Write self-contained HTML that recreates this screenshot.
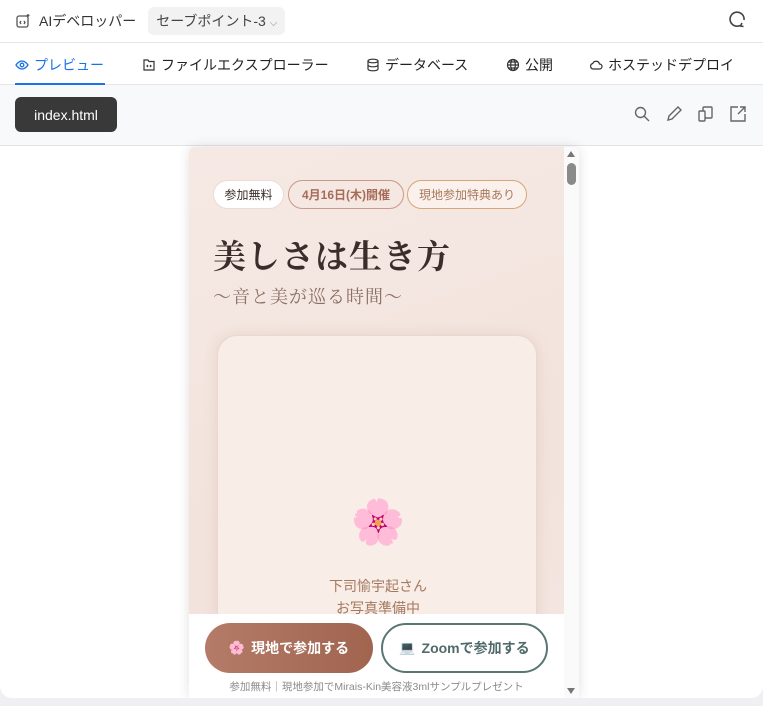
<!DOCTYPE html>
<html><head><meta charset="utf-8"><style>
*{margin:0;padding:0;box-sizing:border-box}
body{width:763px;height:706px;background:#f0f0f2;font-family:"Liberation Sans","Noto Sans CJK JP",sans-serif;overflow:hidden;position:relative}
.card{position:absolute;left:0;top:0;width:763px;height:698px;background:#fff;border-radius:0 0 12px 12px;overflow:hidden}
.hdr{height:42px;display:flex;align-items:center;padding-left:15px;font-size:14px;color:#333}
.sp{margin-left:12px;background:#f2f2f3;border-radius:6px;padding:4px 8px;color:#444;font-size:14px}
.tabs{height:43px;border-top:1px solid #e6e6e8;border-bottom:1px solid #e6e6e8;position:relative;font-size:14px;color:#222}
.tab{position:absolute;top:12px;display:flex;align-items:center;gap:5px}
.tb{height:61px;background:#f8f9fb;border-bottom:1px solid #e3e4e8;position:relative}
.file{position:absolute;left:15px;top:12px;width:102px;height:35px;background:#393939;border-radius:6px;color:#fff;font-size:14px;display:flex;align-items:center;justify-content:center}
.ic{position:absolute;top:20px}
.frame{position:absolute;left:189px;top:147px;width:390px;height:551px;background:linear-gradient(160deg,#f6e9e4,#f2e3dc 60%,#f4e6e1);box-shadow:0 0 12px rgba(0,0,0,.12);border-radius:6px 6px 0 0;overflow:hidden}
.sb{position:absolute;right:0;top:0;width:15px;height:551px;background:#fafafa}
.pill{position:absolute;top:33px;height:29px;border-radius:15px;font-size:12px;display:flex;align-items:center;justify-content:center}
h1{position:absolute;left:24px;top:84px;font-family:"Noto Serif CJK SC","Liberation Serif",serif;font-size:33px;font-weight:700;color:#3a2e2a;letter-spacing:1px}
.sub{position:absolute;left:24px;top:136px;font-family:"Noto Serif CJK SC",serif;font-size:18px;color:#8a7066;letter-spacing:1px}
.ph{position:absolute;left:28px;top:188px;width:320px;height:300px;border-radius:20px;background:#f8ede7;box-shadow:0 0 14px rgba(160,110,90,.15);border:1px solid #ead7cf}
.nm{position:absolute;left:0;width:320px;text-align:center;color:#a4785f;font-size:14px}
.bot{position:absolute;left:0;top:467px;width:375px;height:84px;background:#fff}
.b1{position:absolute;left:16px;top:9px;width:168px;height:50px;border-radius:25px;background:linear-gradient(90deg,#b47c68,#a0644f);color:#fff;font-weight:700;font-size:14px;display:flex;align-items:center;justify-content:center;gap:6px}
.b2{position:absolute;left:192px;top:9px;width:167px;height:50px;border-radius:25px;border:2px solid #5a7673;color:#4f6b69;font-weight:700;font-size:14px;display:flex;align-items:center;justify-content:center;gap:6px}
.ft{position:absolute;left:0;width:375px;top:65px;text-align:center;font-size:10.5px;color:#8b8b8b}
</style></head><body>
<div class="card">
<div class="hdr">
<svg width="16" height="16" viewBox="0 0 16 16" fill="none" stroke="#555" stroke-width="1.3"><rect x="2" y="3" width="11" height="11" rx="2"/><path d="M6 8l-1 1.5 1 1.5M9 8l1 1.5-1 1.5"/><path d="M13 1v3M11.5 2.5h3"/></svg>
<span style="margin-left:8px">AIデベロッパー</span>
<span class="sp">セーブポイント-3 <span style="font-size:10px;color:#888">⌵</span></span>
<svg style="position:absolute;left:729px;top:10px" width="18" height="18" viewBox="0 0 18 18" fill="none" stroke="#444" stroke-width="1.6"><path d="M11 15.5A7 7 0 1 1 15 10"/><path d="M13 13l-1.5 3 3 .5"/></svg>
</div>
<div class="tabs">
<div class="tab" style="left:15px;color:#1a73e8"><svg width="14" height="14" viewBox="0 0 14 14" fill="none" stroke="#1a73e8" stroke-width="1.3"><path d="M1 7s2.5-4 6-4 6 4 6 4-2.5 4-6 4-6-4-6-4z"/><circle cx="7" cy="7" r="1.8"/></svg>プレビュー</div>
<div style="position:absolute;left:15px;top:40px;width:90px;height:3px;background:#1a73e8"></div>
<div class="tab" style="left:142px"><svg width="14" height="14" viewBox="0 0 14 14" fill="none" stroke="#333" stroke-width="1.2"><path d="M2 2h4l1 1.5h5v8.5H2z"/><path d="M6 7l-1 1 1 1M8 7l1 1-1 1"/></svg>ファイルエクスプローラー</div>
<div class="tab" style="left:366px"><svg width="14" height="14" viewBox="0 0 14 14" fill="none" stroke="#333" stroke-width="1.2"><ellipse cx="7" cy="3" rx="5" ry="1.8"/><path d="M2 3v8c0 1 2.2 1.8 5 1.8s5-.8 5-1.8V3M2 7c0 1 2.2 1.8 5 1.8s5-.8 5-1.8"/></svg>データベース</div>
<div class="tab" style="left:506px"><svg width="14" height="14" viewBox="0 0 14 14" fill="none" stroke="#333" stroke-width="1.2"><circle cx="7" cy="7" r="5.5"/><ellipse cx="7" cy="7" rx="2.3" ry="5.5"/><path d="M1.5 7h11M2.5 4h9M2.5 10h9"/></svg>公開</div>
<div class="tab" style="left:589px"><svg width="14" height="14" viewBox="0 0 14 14" fill="none" stroke="#333" stroke-width="1.2"><path d="M4 11h6.5a2.5 2.5 0 0 0 0-5 3.5 3.5 0 0 0-6.7-.5A2.8 2.8 0 0 0 4 11z"/></svg>ホステッドデプロイ</div>
</div>
<div class="tb">
<div class="file">index.html</div>
<svg class="ic" style="left:633px" width="18" height="18" viewBox="0 0 18 18" fill="none" stroke="#666" stroke-width="1.4"><circle cx="7.5" cy="7.5" r="5"/><path d="M11 11l5 5"/></svg>
<svg class="ic" style="left:665px" width="18" height="18" viewBox="0 0 18 18" fill="none" stroke="#666" stroke-width="1.4"><path d="M3 15l1-4 9-9 3 3-9 9z"/></svg>
<svg class="ic" style="left:697px" width="18" height="18" viewBox="0 0 18 18" fill="none" stroke="#666" stroke-width="1.4"><rect x="6" y="2" width="9" height="11" rx="1"/><rect x="2" y="6" width="6" height="10" rx="1" fill="#f8f9fb"/></svg>
<svg class="ic" style="left:729px" width="18" height="18" viewBox="0 0 18 18" fill="none" stroke="#666" stroke-width="1.4"><path d="M9 2H2v14h14V9M11 2h5v5M16 2l-7 7"/></svg>
</div>
<div class="frame">
<div class="pill" style="left:24px;width:71px;background:#fff;border:1px solid #eadbd5;color:#3a2e2a">参加無料</div>
<div class="pill" style="left:99px;width:116px;border:1px solid #c99a88;color:#a66c58;font-weight:700">4月16日(木)開催</div>
<div class="pill" style="left:218px;width:120px;border:1px solid #d6a679;color:#a8785c;background:#fbf1ec">現地参加特典あり</div>
<h1>美しさは生き方</h1>
<div class="sub">〜音と美が巡る時間〜</div>
<div class="ph">
<div style="position:absolute;left:0;width:320px;top:160px;text-align:center;font-size:44px;color:#ff6b8a">🌸</div>
<div class="nm" style="top:240px">下司愉宇起さん</div>
<div class="nm" style="top:262px">お写真準備中</div>
</div>
<div class="bot">
<div class="b1"><span style="font-size:13px">🌸</span>現地で参加する</div>
<div class="b2"><span style="font-size:13px">💻</span>Zoomで参加する</div>
<div class="ft">参加無料｜現地参加でMirais-Kin美容液3mlサンプルプレゼント</div>
</div>
<div class="sb">
<div style="position:absolute;left:3px;top:4px;border:4px solid transparent;border-bottom:6px solid #777;border-top:0"></div>
<div style="position:absolute;left:3px;top:16px;width:9px;height:22px;border-radius:5px;background:#8a8a8a"></div>
<div style="position:absolute;left:3px;top:541px;border:4px solid transparent;border-top:6px solid #777;border-bottom:0"></div>
</div>
</div>
</div>
</body></html>
